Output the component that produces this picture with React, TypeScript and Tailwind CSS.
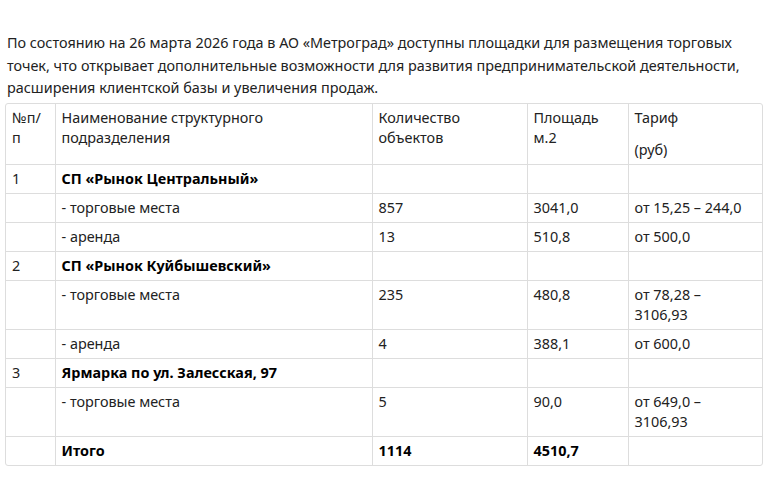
import React from "react";

type Row = {
  n?: string;
  name: React.ReactNode;
  bold?: boolean;
  qty?: string;
  area?: string;
  tariff?: React.ReactNode;
};

const rows: Row[] = [
  { n: "1", name: "СП «Рынок Центральный»", bold: true },
  { name: "- торговые места", qty: "857", area: "3041,0", tariff: "от 15,25 – 244,0" },
  { name: "- аренда", qty: "13", area: "510,8", tariff: "от 500,0" },
  { n: "2", name: "СП «Рынок Куйбышевский»", bold: true },
  { name: "- торговые места", qty: "235", area: "480,8", tariff: <>от 78,28 –<br />3106,93</> },
  { name: "- аренда", qty: "4", area: "388,1", tariff: "от 600,0" },
  { n: "3", name: "Ярмарка по ул. Залесская, 97", bold: true },
  { name: "- торговые места", qty: "5", area: "90,0", tariff: <>от 649,0 –<br />3106,93</> },
];

export default function App() {
  const cell = "border border-[#dddddd] px-[6px] pt-[4px] pb-[4px] align-top text-left";
  return (
    <div
      className="bg-white text-[#222222] w-[767px] h-[480px] overflow-hidden"
      style={{ fontFamily: '"Noto Sans", "Open Sans", sans-serif' }}
    >
      <p className="pt-[32px] pl-[7px] w-[762px] text-[14.4px] leading-[22.5px]">
        По состоянию на 26 марта 2026 года в АО «Метроград» доступны площадки для размещения торговых точек, что открывает дополнительные возможности для развития предпринимательской деятельности, расширения клиентской базы и увеличения продаж.
      </p>
      <div className="ml-[5px] mt-[3px] w-[758px] border border-[#dddddd] rounded-[3px] overflow-hidden">
        <table className="w-full table-fixed border-collapse border-hidden text-[14.4px] leading-[20px]">
          <colgroup>
            <col className="w-[49px]" />
            <col className="w-[317px]" />
            <col className="w-[155px]" />
            <col className="w-[101px]" />
            <col />
          </colgroup>
          <tbody>
            <tr>
              <td className={`${cell} h-[58px]`}>№п/<br />п</td>
              <td className={cell}>Наименование структурного<br />подразделения</td>
              <td className={cell}>Количество<br />объектов</td>
              <td className={cell}>Площадь<br />м.2</td>
              <td className={cell}>
                <p className="mb-[12px]">Тариф</p>
                <p>(руб)</p>
              </td>
            </tr>
            {rows.map((r, i) => (
              <tr key={i}>
                <td className={`${cell} h-[28px]`}>{r.n}</td>
                <td className={`${cell} ${r.bold ? "font-bold text-black" : ""}`}>{r.name}</td>
                <td className={cell}>{r.qty}</td>
                <td className={cell}>{r.area}</td>
                <td className={cell}>{r.tariff}</td>
              </tr>
            ))}
            <tr>
              <td className={`${cell} h-[28px]`}></td>
              <td className={`${cell} font-bold text-black`}>Итого</td>
              <td className={`${cell} font-bold text-black`}>1114</td>
              <td className={`${cell} font-bold text-black`}>4510,7</td>
              <td className={cell}></td>
            </tr>
          </tbody>
        </table>
      </div>
    </div>
  );
}
